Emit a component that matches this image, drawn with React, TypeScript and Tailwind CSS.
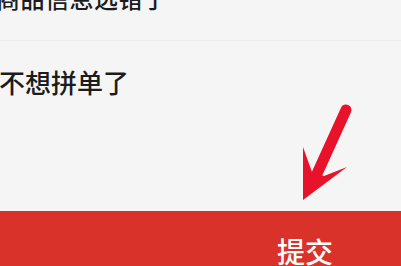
export default function App() {
    return (
        <div
            className="relative w-[401px] h-[266px] overflow-hidden bg-[#f5f5f5] flex flex-col"
            style={{ fontFamily: '"Noto Sans CJK SC", "Noto Sans", sans-serif' }}
        >
            <div className="-mt-[15px] border-b border-[#ebebeb] pb-[30px]">
                <p className="text-[24px] leading-[25px] font-medium text-[#1c1c1c] -ml-[4px] tracking-[0.5px]">
                    商品信息选错了
                </p>
            </div>
            <div className="pt-[27px]">
                <p className="text-[26px] leading-[27px] font-medium text-[#1c1c1c] -ml-[1px]">
                    不想拼单了
                </p>
            </div>
            <div className="flex-1" />
            <div className="h-[55px] bg-[#d9322a] flex justify-end pr-[68px] pt-[25px]">
                <span className="text-[28px] leading-[30px] font-medium text-white">提交</span>
            </div>

            <svg
                className="absolute left-[296px] top-[100px]"
                width="60"
                height="108"
                viewBox="0 0 60 108"
            >
                <line
                    x1="50"
                    y1="10"
                    x2="20"
                    y2="76"
                    stroke="#e8132a"
                    strokeWidth="11"
                    strokeLinecap="round"
                />
                <polygon points="7,47 16,72 28,76 51,67 7,100" fill="#e8132a" />
            </svg>
        </div>
    );
}
